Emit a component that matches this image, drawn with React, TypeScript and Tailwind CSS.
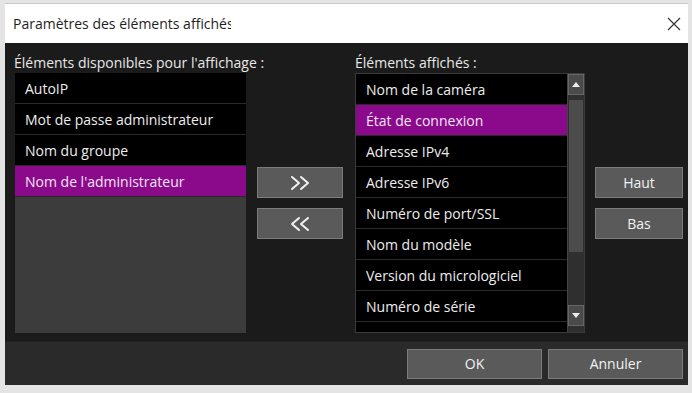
import React from 'react';

const available = ['AutoIP', 'Mot de passe administrateur', 'Nom du groupe', "Nom de l'administrateur"];
const displayed = [
  'Nom de la caméra',
  'État de connexion',
  'Adresse IPv4',
  'Adresse IPv6',
  'Numéro de port/SSL',
  'Nom du modèle',
  'Version du micrologiciel',
  'Numéro de série',
];

function Row({ label, selected }: { label: string; selected?: boolean }) {
  return (
    <div
      className={
        'h-[31px] shrink-0 flex items-center pl-[10px] border-b border-[#2a2a2a] text-[14px] whitespace-nowrap ' +
        (selected ? 'bg-[#8b0a8b] text-[#f4e6f4]' : 'bg-black text-[#ededed]')
      }
    >
      {label}
    </div>
  );
}

function Btn({ children, className = '' }: { children: React.ReactNode; className?: string }) {
  return (
    <button
      className={
        'flex items-center justify-center bg-[#5a5a5a] border border-[#7c7c7c] text-[#f2f2f2] text-[14px] ' + className
      }
    >
      {children}
    </button>
  );
}

function Chevrons({ left }: { left?: boolean }) {
  return (
    <svg width="22" height="16" viewBox="0 0 22 16" fill="none">
      <g stroke="#f2f2f2" strokeWidth="2" strokeLinecap="round" strokeLinejoin="round">
        {left ? (
          <>
            <path d="M10 2 L3 8 L10 14" />
            <path d="M19 2 L12 8 L19 14" />
          </>
        ) : (
          <>
            <path d="M3 2 L10 8 L3 14" />
            <path d="M12 2 L19 8 L12 14" />
          </>
        )}
      </g>
    </svg>
  );
}

export default function App() {
  return (
    <div
      className="w-[692px] h-[393px] bg-[#e4e4e4] pl-[5px] pr-[4px] pt-[3px] pb-[8px] flex"
      style={{ fontFamily: '"Open Sans", "Noto Sans", sans-serif' }}
    >
      <div className="flex-1 flex flex-col border-t border-[#c8c8c8]">
        {/* title bar, text clipped like the source window */}
        <div className="h-[39px] bg-white flex items-center justify-between pl-[8px] pr-[6px]">
          <div className="w-[218px] shrink-0 text-[14px] text-[#1e1e1e] overflow-hidden whitespace-nowrap">
            Paramètres des éléments affichés
          </div>
          <svg width="14" height="14" viewBox="0 0 14 14" className="mr-[1px]">
            <path d="M1 1 L13 13 M13 1 L1 13" stroke="#333" strokeWidth="1.2" />
          </svg>
        </div>

        {/* body */}
        <div className="flex-1 bg-[#1b1b1b] flex pt-[13px] pl-[10px]">
          <div className="w-[231px] flex flex-col">
            <div className="h-[17px] text-[14px] text-[#e8e8e8] leading-[14px] -ml-[1px] whitespace-nowrap">
              Éléments disponibles pour l'affichage :
            </div>
            <div className="h-[260px] bg-[#3c3c3c] flex flex-col">
              {available.map((a, i) => (
                <Row key={a} label={a} selected={i === 3} />
              ))}
            </div>
          </div>

          <div className="w-[86px] ml-[11px] flex flex-col gap-[10px] pt-[111px]">
            <Btn className="h-[31px]">
              <Chevrons />
            </Btn>
            <Btn className="h-[31px]">
              <Chevrons left />
            </Btn>
          </div>

          <div className="w-[230px] ml-[12px] flex flex-col">
            <div className="h-[17px] text-[14px] text-[#e8e8e8] leading-[14px]">Éléments affichés :</div>
            <div className="h-[260px] bg-black border border-[#3a3a3a] flex overflow-hidden">
              <div className="flex-1 flex flex-col overflow-hidden">
                {displayed.map((d, i) => (
                  <Row key={d} label={d} selected={i === 1} />
                ))}
                <div className="h-[31px] shrink-0 bg-black" />
              </div>
              <div className="w-[17px] bg-[#2f2f2f] border-l border-[#444] flex flex-col items-stretch">
                <div className="h-[21px] bg-[#4a4a4a] border border-[#666] flex items-center justify-center">
                  <svg width="8" height="5" viewBox="0 0 8 5">
                    <path d="M0 5 L4 0 L8 5 Z" fill="#eee" />
                  </svg>
                </div>
                <div className="h-[152px] mt-[5px] mx-[1px] bg-[#4c4c4c]" />
                <div className="flex-1" />
                <div className="h-[21px] mb-[6px] bg-[#4a4a4a] border border-[#666] flex items-center justify-center">
                  <svg width="8" height="5" viewBox="0 0 8 5">
                    <path d="M0 0 L8 0 L4 5 Z" fill="#eee" />
                  </svg>
                </div>
              </div>
            </div>
          </div>

          <div className="w-[88px] ml-[10px] flex flex-col gap-[10px] pt-[111px]">
            <Btn className="h-[31px]">Haut</Btn>
            <Btn className="h-[31px]">Bas</Btn>
          </div>
        </div>

        {/* footer */}
        <div className="h-[44px] bg-[#2a2a2a] border-t border-[#222] flex items-center justify-end gap-[6px] pr-[5px]">
          <Btn className="w-[135px] h-[30px]">OK</Btn>
          <Btn className="w-[135px] h-[30px]">Annuler</Btn>
        </div>
      </div>
    </div>
  );
}
